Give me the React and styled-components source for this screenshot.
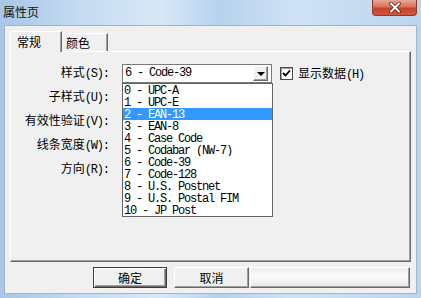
import React from 'react';
import styled, { createGlobalStyle } from 'styled-components';

const GlobalStyle = createGlobalStyle`
    html, body {
        margin: 0;
        padding: 0;
    }
    body {
        font-family: "Noto Sans CJK SC", "Liberation Sans", sans-serif;
        font-size: 12px;
        color: #000;
    }
`;

const Window = styled.div`
    width: 421px;
    height: 298px;
    box-sizing: border-box;
    padding: 0 4px 4px 4px;
    display: flex;
    flex-direction: column;
    background: linear-gradient(90deg, #a8c6e6 0%, #c3daf1 18%, #d9e8f7 38%, #b7d2ee 52%, #cfe2f5 70%, #bcd5ee 100%);
`;

const TitleBar = styled.div`
    height: 25px;
    display: flex;
    justify-content: space-between;
    align-items: flex-start;
`;

const Title = styled.div`
    margin-left: -1px;
    padding-top: 4px;
    line-height: 16px;
    font-size: 12px;
    color: #111;
`;

const CloseButton = styled.div`
    width: 45px;
    height: 16px;
    box-sizing: border-box;
    border: 1px solid #8a3b2c;
    border-top: none;
    border-radius: 0 0 4px 4px;
    background: linear-gradient(180deg, #e6a797 0%, #d9715c 45%, #c8432a 55%, #d0583d 100%);
    display: flex;
    align-items: center;
    justify-content: center;
`;

const Client = styled.div`
    flex: 1;
    box-sizing: border-box;
    border: 1px solid #a3b4c7;
    background: #f0f0f0;
    padding: 5px 5px 0 5px;
    display: flex;
    flex-direction: column;
`;

const TabStrip = styled.div`
    height: 20px;
    display: flex;
    align-items: flex-end;
    position: relative;
    z-index: 1;
`;

const Tab = styled.div`
    box-sizing: border-box;
    height: ${p => (p.$active ? '21px' : '18px')};
    width: ${p => p.$width}px;
    padding-left: ${p => p.$pad}px;
    line-height: ${p => (p.$active ? '19px' : '17px')};
    background: #f0f0f0;
    border-top: 1px solid #fff;
    border-left: ${p => (p.$active ? '1px solid #fff' : 'none')};
    border-right: 1px solid #696969;
    box-shadow: inset -1px 0 0 #a0a0a0;
    margin-bottom: ${p => (p.$active ? '-1px' : '0')};
`;

const Panel = styled.div`
    flex: 1;
    box-sizing: border-box;
    border-top: 1px solid #fff;
    border-left: 1px solid #fff;
    border-right: 1px solid #696969;
    border-bottom: 1px solid #696969;
    box-shadow: inset -1px -1px 0 #a0a0a0;
    padding-top: 9px;
`;

const Form = styled.div`
    display: grid;
    grid-template-columns: 111px 158px auto;
    grid-auto-rows: 24px;
    align-items: center;
`;

const Label = styled.div`
    grid-column: 1;
    text-align: right;
    padding-right: 12px;
    white-space: nowrap;
    line-height: 16px;
`;

const MonoText = styled.span`
    font-family: "Liberation Mono", monospace;
    font-size: 12px;
    letter-spacing: -1.2px;
    white-space: pre;
`;

const Key = styled(MonoText)`
    margin-right: 1.2px;
`;

const Combo = styled.div`
    position: relative;
    width: 150px;
    height: 19px;
    box-sizing: border-box;
    border: 1px solid #7a7a7a;
    background: #fff;
    display: flex;
    align-items: center;
`;

const ComboText = styled(MonoText)`
    padding-left: 2px;
    line-height: 16px;
`;

const ArrowButton = styled.div`
    margin-left: auto;
    margin-right: 3px;
    width: 15px;
    height: 15px;
    box-sizing: border-box;
    background: #f0f0f0;
    border: 1px solid;
    border-color: #fff #696969 #696969 #fff;
    box-shadow: inset -1px -1px 0 #a0a0a0;
    display: flex;
    align-items: center;
    justify-content: center;
`;

const Arrow = styled.div`
    width: 0;
    height: 0;
    border-left: 4px solid transparent;
    border-right: 4px solid transparent;
    border-top: 4px solid #000;
    margin-top: 1px;
`;

const DropList = styled.div`
    position: absolute;
    top: 18px;
    left: -1px;
    width: 151px;
    box-sizing: border-box;
    border: 1px solid #646464;
    background: #fff;
    z-index: 2;
`;

const Item = styled.div`
    height: 12px;
    padding-left: 1px;
    background: ${p => (p.$selected ? '#3399ff' : 'transparent')};
    color: ${p => (p.$selected ? '#fff' : '#000')};
    overflow: hidden;
`;

const ItemText = styled(MonoText)`
    display: block;
    line-height: 12px;
    height: 12px;
    padding-top: 1px;
    box-sizing: border-box;
`;

const CheckRow = styled.div`
    display: flex;
    align-items: center;
    gap: 5px;
    white-space: nowrap;
`;

const CheckBox = styled.div`
    width: 13px;
    height: 13px;
    box-sizing: border-box;
    border: 1px solid #4a4a4a;
    box-shadow: inset 1px 1px 0 #a0a0a0;
    background: #fff;
    display: flex;
    align-items: center;
    justify-content: center;
`;

const ButtonRow = styled.div`
    margin-top: 5px;
    height: 21px;
    margin-right: 1px;
    margin-bottom: 5px;
    display: flex;
    justify-content: flex-end;
    gap: ${p => p.$gap}px;
`;

const Buttons = styled.div`
    display: flex;
    gap: 7px;
`;

const Button = styled.div`
    width: ${p => p.$width}px;
    height: 21px;
    box-sizing: border-box;
    background: #f0f0f0;
    display: flex;
    align-items: center;
    justify-content: center;
    line-height: 16px;
    border: 1px solid;
    border-color: ${p => (p.$default ? '#3c3c3c' : '#fff #696969 #696969 #fff')};
    box-shadow: ${p => (p.$default
        ? 'inset 1px 1px 0 #fff, inset -1px -1px 0 #696969, inset -2px -2px 0 #a0a0a0'
        : 'inset -1px -1px 0 #a0a0a0')};
`;

const BlankButton = styled(Button)`
    background: linear-gradient(180deg, #ececec 0%, #fbfbfb 35%, #f6f6f6 60%, #e6e6e6 100%);
`;

const items = [
    '0 - UPC-A',
    '1 - UPC-E',
    '2 - EAN-13',
    '3 - EAN-8',
    '4 - Case Code',
    '5 - Codabar (NW-7)',
    '6 - Code-39',
    '7 - Code-128',
    '8 - U.S. Postnet',
    '9 - U.S. Postal FIM',
    '10 - JP Post',
];

const labels = [
    ['子样式', '(U):'],
    ['有效性验证', '(V):'],
    ['线条宽度', '(W):'],
    ['方向', '(R):'],
];

export default function App() {
    return (
        <Window>
            <GlobalStyle />
            <TitleBar>
                <Title>属性页</Title>
                <CloseButton>
                    <svg width="14" height="11" viewBox="0 0 14 11">
                        <path d="M3 1.5 L11 9.5 M11 1.5 L3 9.5" stroke="#5a1e14" strokeWidth="3.6" strokeLinecap="round" />
                        <path d="M3 1.5 L11 9.5 M11 1.5 L3 9.5" stroke="#fff" strokeWidth="2" strokeLinecap="round" />
                    </svg>
                </CloseButton>
            </TitleBar>
            <Client>
                <TabStrip>
                    <Tab $active $width={52} $pad={6}>常规</Tab>
                    <Tab $width={46} $pad={4}>颜色</Tab>
                </TabStrip>
                <Panel>
                    <Form>
                        <Label>样式<Key>(S):</Key></Label>
                        <div>
                            <Combo>
                                <ComboText>6 - Code-39</ComboText>
                                <ArrowButton><Arrow /></ArrowButton>
                                <DropList>
                                    {items.map((it, i) => (
                                        <Item key={it} $selected={i === 2}>
                                            <ItemText>{it}</ItemText>
                                        </Item>
                                    ))}
                                </DropList>
                            </Combo>
                        </div>
                        <CheckRow>
                            <CheckBox>
                                <svg width="9" height="9" viewBox="0 0 9 9">
                                    <path d="M1 4 L3.5 6.5 L8 1.5" fill="none" stroke="#000" strokeWidth="1.8" />
                                </svg>
                            </CheckBox>
                            <span>显示数据<Key>(H)</Key></span>
                        </CheckRow>
                        {labels.map(([text, key]) => (
                            <Label key={key}>{text}<Key>{key}</Key></Label>
                        ))}
                    </Form>
                </Panel>
                <ButtonRow $gap={1}>
                    <Buttons>
                        <Button $default $width={74}>确定</Button>
                        <Button $width={75}>取消</Button>
                    </Buttons>
                    <BlankButton $width={160} />
                </ButtonRow>
            </Client>
        </Window>
    );
}
